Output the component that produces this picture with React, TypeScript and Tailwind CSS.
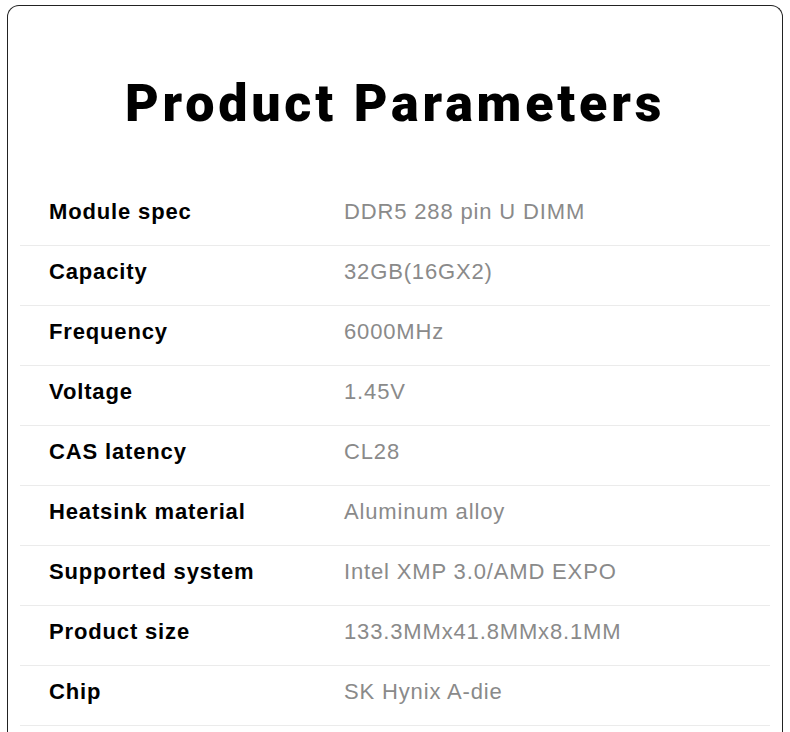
const params: { label: string; value: string }[] = [
  { label: 'Module spec', value: 'DDR5 288 pin U DIMM' },
  { label: 'Capacity', value: '32GB(16GX2)' },
  { label: 'Frequency', value: '6000MHz' },
  { label: 'Voltage', value: '1.45V' },
  { label: 'CAS latency', value: 'CL28' },
  { label: 'Heatsink material', value: 'Aluminum alloy' },
  { label: 'Supported system', value: 'Intel XMP 3.0/AMD EXPO' },
  { label: 'Product size', value: '133.3MMx41.8MMx8.1MM' },
  { label: 'Chip', value: 'SK Hynix A-die' },
];

export default function App() {
  return (
    <div className="min-h-screen bg-white px-[7px] pt-[5px]">
      <div className="rounded-t-[12px] border border-b-0 border-[#222] bg-white px-[12px] pb-[60px]">
        <h1 className="pt-[72px] text-center font-['Roboto',sans-serif] text-[52px] font-black leading-none tracking-[3.8px] text-black">
          Product Parameters
        </h1>

        <div className="mt-[56px] font-['Liberation_Sans',Arial,sans-serif] text-[22px] leading-[28px] tracking-[0.85px]">
          {params.map((p) => (
            <div
              key={p.label}
              className="flex border-b border-[#ebebeb] pb-[19px] pl-[29px] pt-[12px]"
            >
              <div className="w-[295px] shrink-0 font-bold text-black">{p.label}</div>
              <div className="text-[#8a8a8a]">{p.value}</div>
            </div>
          ))}
        </div>
      </div>
    </div>
  );
}
